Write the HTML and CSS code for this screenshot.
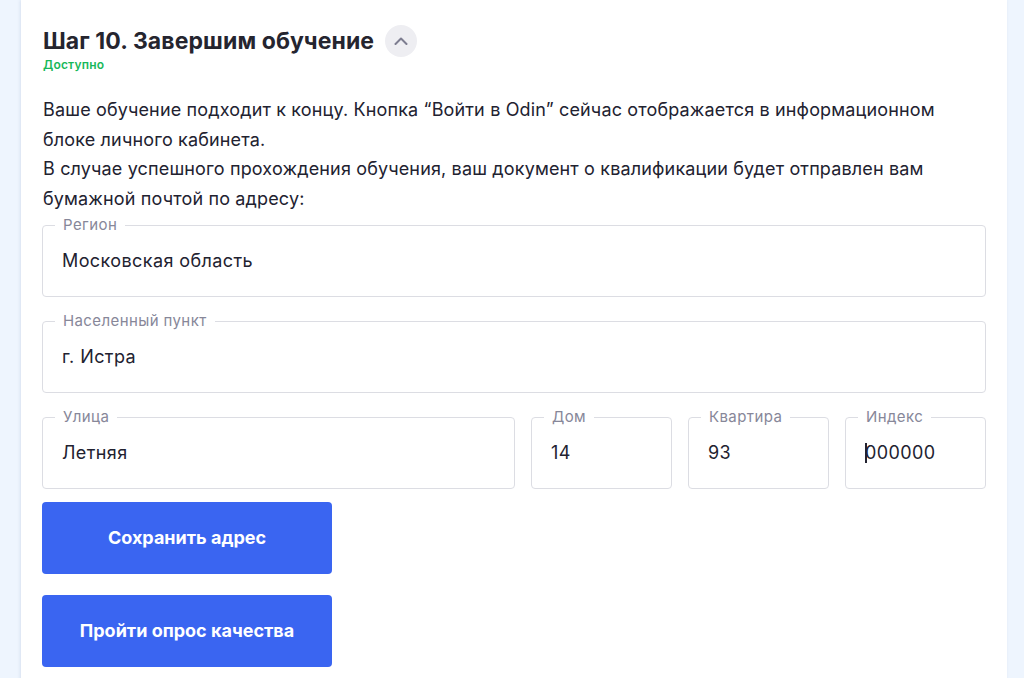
FILE: index.html
```html
<!DOCTYPE html>
<html lang="ru">
<head>
<meta charset="utf-8">
<title>Шаг 10</title>
<link rel="stylesheet" href="styles.css">
</head>
<body>
<div class="page">
  <section class="card">
    <div class="step-head">
      <h2 class="step-title">Шаг 10. Завершим обучение</h2>
      <button class="toggle" type="button" aria-label="Свернуть">
        <svg width="14" height="8" viewBox="0 0 14 8"><path d="M1.5 7 L7 1.5 L12.5 7" fill="none" stroke="#7d7d90" stroke-width="2" stroke-linecap="round" stroke-linejoin="round"/></svg>
      </button>
    </div>
    <div class="status">Доступно</div>
    <p class="text">Ваше обучение подходит к концу. Кнопка “Войти в Odin” сейчас отображается в информационном блоке личного кабинета.<br>В случае успешного прохождения обучения, ваш документ о квалификации будет отправлен вам бумажной почтой по адресу:</p>
    <div class="fields">
      <div class="field"><span class="label">Регион</span><span class="value">Московская область</span></div>
      <div class="field"><span class="label">Населенный пункт</span><span class="value">г. Истра</span></div>
      <div class="row">
        <div class="field"><span class="label">Улица</span><span class="value">Летняя</span></div>
        <div class="field"><span class="label">Дом</span><span class="value">14</span></div>
        <div class="field"><span class="label">Квартира</span><span class="value">93</span></div>
        <div class="field"><span class="label">Индекс</span><span class="value"><span class="caret"></span>000000</span></div>
      </div>
    </div>
    <button class="btn btn-save" type="button">Сохранить адрес</button>
    <button class="btn" type="button">Пройти опрос качества</button>
  </section>
</div>
</body>
</html>
```

FILE: styles.css
```css
* { box-sizing: border-box; }
html, body { margin: 0; padding: 0; }
body {
  background: #eef5fe;
  font-family: Inter, "Noto Sans", sans-serif;
  color: #222230;
  height: 678px;
  overflow: hidden;
}
.page {
  padding: 0 17px 0 21px;
}
.card {
  background: #fff;
  box-shadow: -1px 0 3px rgba(60, 90, 140, 0.12);
  padding: 27px 21px 40px 21px;
  min-height: 700px;
}
.step-head {
  display: flex;
  align-items: center;
  gap: 11px;
  height: 28px;
}
.step-title {
  margin: 0 0 0 1px;
  font-size: 23px;
  line-height: 28px;
  font-weight: 700;
  color: #25252f;
  letter-spacing: 0.1px;
}
.toggle {
  width: 32px;
  height: 32px;
  border-radius: 50%;
  border: none;
  background: #eeeef2;
  display: flex;
  align-items: center;
  justify-content: center;
  padding: 0;
}
.status {
  margin: 2px 0 0 1px;
  font-size: 12px;
  line-height: 15px;
  font-weight: 600;
  color: #18b85a;
  letter-spacing: 0.2px;
}
.text {
  margin: 23px 0 0 1px;
  font-size: 18px;
  line-height: 29.7px;
  color: #222230;
  letter-spacing: 0.15px;
}
.fields {
  margin-top: 11px;
  display: flex;
  flex-direction: column;
  gap: 24px;
}
.row {
  display: grid;
  grid-template-columns: 1fr 141px 141px 141px;
  gap: 16px;
}
.field {
  position: relative;
  height: 72px;
  border: 1px solid #dcdde3;
  border-radius: 4px;
  display: flex;
  align-items: center;
  padding: 0 19px;
}
.label {
  position: absolute;
  top: -10px;
  left: 12px;
  padding: 0 8px;
  background: #fff;
  font-size: 15px;
  line-height: 18px;
  color: #878799;
  letter-spacing: 0.4px;
}
.value {
  font-size: 18px;
  line-height: 22px;
  color: #222230;
  letter-spacing: 0.4px;
}
.caret {
  display: inline-block;
  width: 2px;
  height: 20px;
  background: #222230;
  vertical-align: -4px;
  margin-right: -2px;
}
.btn {
  display: flex;
  align-items: center;
  justify-content: center;
  width: 290px;
  height: 72px;
  border: none;
  border-radius: 4px;
  background: #3a65f1;
  color: #fff;
  font-family: Inter, "Noto Sans", sans-serif;
  font-size: 18px;
  font-weight: 700;
  margin-top: 21px;
}
.btn-save {
  margin-top: 13px;
}
```
